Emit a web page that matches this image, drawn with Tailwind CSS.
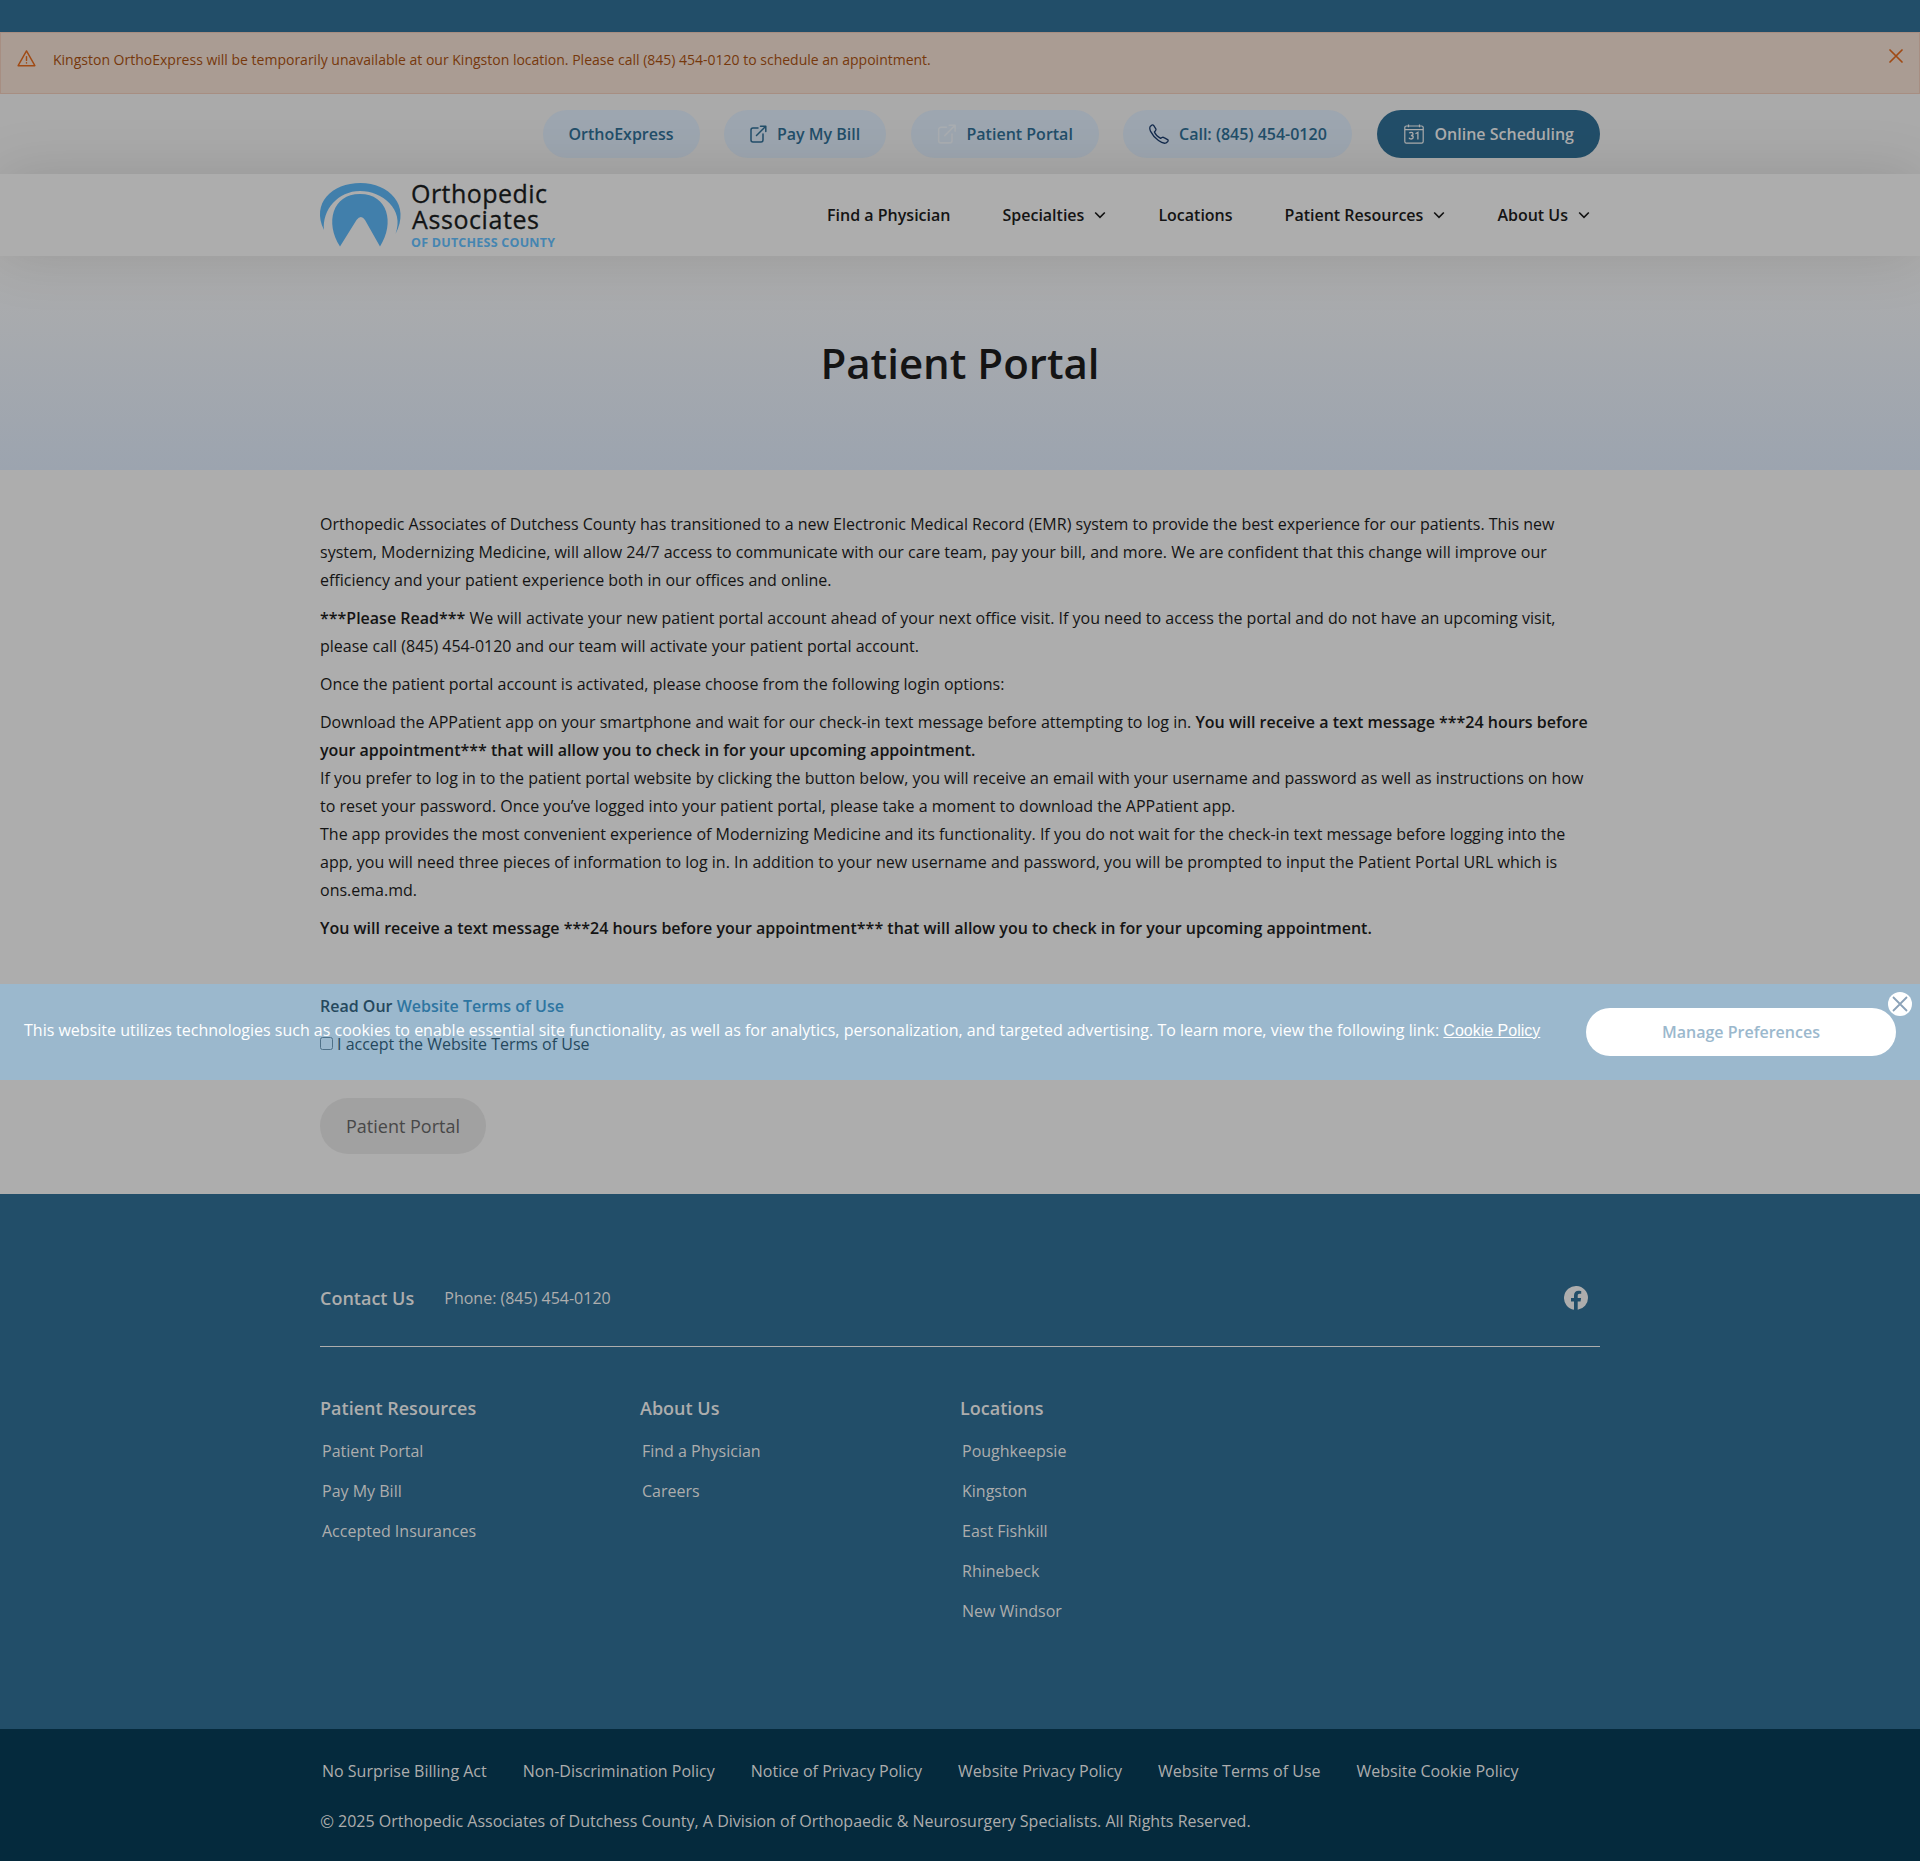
<!DOCTYPE html>
<html lang="en">
<head>
<meta charset="utf-8">
<title>Patient Portal</title>
<script src="https://cdn.jsdelivr.net/npm/@tailwindcss/browser@4"></script>
</head>
<body class="relative w-[1920px] h-[1861px] overflow-hidden bg-[#adadad] text-[#141414] text-base font-['Open_Sans',sans-serif]">
<div class="h-8 bg-[#224e69]"></div>

<div class="h-[62px] flex items-start bg-[#aa9c93] border border-[#a78e82] px-4 text-[#76380c]">
  <svg class="mt-[16px] w-[19px] h-[19px] shrink-0" viewBox="0 0 20 20" fill="none" stroke="#a04a14" stroke-width="1.5" stroke-linejoin="round" stroke-linecap="round"><path d="M10 2 L18.8 17.6 H1.2Z"/><path d="M10 8v4M10 14.4v.4"/></svg>
  <p class="ml-[17px] mt-[17px] text-sm leading-5 grow">Kingston OrthoExpress will be temporarily unavailable at our Kingston location. Please call (845) 454-0120 to schedule an appointment.</p>
  <svg class="mt-[16px] w-[14px] h-[14px]" viewBox="0 0 14 14" stroke="#a04a14" stroke-width="1.7" stroke-linecap="round"><path d="M1 1 13 13M13 1 1 13"/></svg>
</div>

<div class="h-20 bg-[#aaaaaa] pt-4">
  <div class="w-[1280px] mx-auto flex justify-end gap-[24.5px] font-semibold text-[#224e69]">
    <a class="h-12 w-[157px] rounded-full bg-[#9da6b0] flex items-center justify-center">OrthoExpress</a>
    <a class="h-12 w-[162px] rounded-full bg-[#9da6b0] flex items-center pl-[26px]"><svg class="w-[17px] h-[18px] mr-[10px]" viewBox="0 0 17 18" fill="none" stroke="#224e69" stroke-width="1.5" stroke-linecap="round" stroke-linejoin="round"><path d="M8 3H3a2 2 0 0 0-2 2v10a2 2 0 0 0 2 2h8a2 2 0 0 0 2-2V9M6.5 10.5 15.5 1.5M10.5 1.2h5.3v5.3"/></svg>Pay My Bill</a>
    <a class="h-12 w-[188px] rounded-full bg-[#9da6b0] flex items-center pl-[26px]"><svg class="w-[20px] h-[20px] mr-[10px]" viewBox="0 0 17 18" fill="none" stroke="#a9adb1" stroke-width="1.4" stroke-linecap="round" stroke-linejoin="round"><path d="M8 3H3a2 2 0 0 0-2 2v10a2 2 0 0 0 2 2h8a2 2 0 0 0 2-2V9M6.5 10.5 15.5 1.5M10.5 1.2h5.3v5.3"/></svg>Patient Portal</a>
    <a class="h-12 w-[229px] rounded-full bg-[#9da6b0] flex items-center pl-[26px]"><svg class="w-[20px] h-[20px] mr-[10px]" viewBox="0 0 20 20" fill="none" stroke="#132a4c" stroke-width="1.3" stroke-linejoin="round"><path d="M1.2 2.5 3 1Q4 .6 4.8 1.6L6.8 4.8Q7.3 5.8 6.4 6.8L5.4 8Q7 12 11.6 14.4L13 13.5Q14 13 15 13.6L18.6 15.6Q19.6 16.4 18.8 17.4L17 19Q14 20 9.5 16.6 4 12.3 1.6 7.4.2 4.3 1.2 2.5Z"/></svg>Call: (845) 454-0120</a>
    <a class="h-12 w-[223.5px] rounded-full bg-[#224e69] text-[#adadad] flex items-center pl-[27px]"><svg class="w-5 h-5 mr-[11px]" viewBox="0 0 20 20" fill="none" stroke="#adadad" stroke-width="1.2"><rect x=".8" y="2" width="18.4" height="17.2" rx="1.6"/><path d="M.8 5.7h18.4M4.5.5v2.8M15.5.5v2.8"/><path d="M5.3 9.3q.5-1 2-1 1.700 0 1.700 1.600T6.900 11.500q2.300 0 2.300 1.700T7.200 15q-1.600 0-2.200-1.200M11.500 9.700l2.400-1.400V15.500" stroke-width="1.3"/></svg>Online Scheduling</a>
  </div>
</div>

<header class="relative z-10 h-[82px] bg-[#adadad] shadow-[0_0_60px_rgba(0,0,0,0.13)]">
  <div class="w-[1280px] h-full mx-auto flex items-start justify-between">
    <svg class="mt-[9px] w-[240px] h-[68px] overflow-visible" viewBox="0 0 240 68">
      <g fill="#417fab"><path d="M4 47C-9 20 12 0 40.500 0S91 22 75.500 51C85 26 62 8 40 8S2 27 4 47Z"/><path d="M20 63.500C5 40 12 11 40 11S75 40 60 63.500L45 37Q41 31 36.500 37Z"/></g>
      <g font-family="Open Sans, sans-serif"><text x="91" y="20" font-size="25" textLength="136" fill="#121415" stroke="#121415" stroke-width=".3">Orthopedic</text><text x="92" y="45.500" font-size="25" textLength="127" fill="#121415" stroke="#121415" stroke-width=".3">Associates</text><text x="91" y="64" font-size="12.500" font-weight="700" textLength="144" fill="#4585b1">OF DUTCHESS COUNTY</text></g>
    </svg>
    <nav class="h-full flex items-center gap-[52px] pr-[10px] font-semibold">
      <a>Find a Physician</a>
      <a class="flex items-center gap-[10px]">Specialties<svg class="w-3 h-3" viewBox="0 0 12 12" fill="none" stroke="#121212" stroke-width="1.6"><path d="M1.200 3.500 6 8.400 10.800 3.500"/></svg></a>
      <a>Locations</a>
      <a class="flex items-center gap-[10px]">Patient Resources<svg class="w-3 h-3" viewBox="0 0 12 12" fill="none" stroke="#121212" stroke-width="1.6"><path d="M1.200 3.500 6 8.400 10.800 3.500"/></svg></a>
      <a class="flex items-center gap-[10px]">About Us<svg class="w-3 h-3" viewBox="0 0 12 12" fill="none" stroke="#121212" stroke-width="1.6"><path d="M1.200 3.500 6 8.400 10.800 3.500"/></svg></a>
    </nav>
  </div>
</header>

<section class="h-[214px] flex items-center justify-center bg-linear-to-b from-[#adadad] to-[#9ca4af]">
  <h1 class="text-[42px] leading-none font-semibold">Patient Portal</h1>
</section>

<div class="absolute left-0 top-[984px] w-full h-24 bg-[#9bb8cd]"></div>

<main class="relative h-[724px] pt-10">
  <div class="w-[1280px] mx-auto leading-7">
    <p class="mb-[10px]">Orthopedic Associates of Dutchess County has transitioned to a new Electronic Medical Record (EMR) system to provide the best experience for our patients. This new<br>system, Modernizing Medicine, will allow 24/7 access to communicate with our care team, pay your bill, and more. We are confident that this change will improve our<br>efficiency and your patient experience both in our offices and online.</p>
    <p class="mb-[10px]"><b class="font-semibold">***Please Read***</b> We will activate your new patient portal account ahead of your next office visit. If you need to access the portal and do not have an upcoming visit,<br>please call (845) 454-0120 and our team will activate your patient portal account.</p>
    <p class="mb-[10px]">Once the patient portal account is activated, please choose from the following login options:</p>
    <ul class="mb-[10px]">
      <li>Download the APPatient app on your smartphone and wait for our check-in text message before attempting to log in. <b class="font-semibold">You will receive a text message ***24 hours before<br>your appointment*** that will allow you to check in for your upcoming appointment.</b></li>
      <li>If you prefer to log in to the patient portal website by clicking the button below, you will receive an email with your username and password as well as instructions on how<br>to reset your password. Once you’ve logged into your patient portal, please take a moment to download the APPatient app.</li>
      <li>The app provides the most convenient experience of Modernizing Medicine and its functionality. If you do not wait for the check-in text message before logging into the<br>app, you will need three pieces of information to log in. In addition to your new username and password, you will be prompted to input the Patient Portal URL which is<br>ons.ema.md.</li>
    </ul>
    <p class="font-semibold mb-[50px]">You will receive a text message ***24 hours before your appointment*** that will allow you to check in for your upcoming appointment.</p>
    <p class="font-semibold text-[#25485d] mb-[10px]">Read Our <a class="text-[#2e75a1]">Website Terms of Use</a></p>
    <label class="flex items-center text-[#25485d]"><span class="w-[13px] h-[13px] mr-1 -mt-0.5 border border-[#4f7188] rounded-[2.5px]"></span>I accept the Website Terms of Use</label>
    <button class="mt-10 w-[166px] h-14 rounded-full bg-[#a1a1a1] text-[#484848] text-lg">Patient Portal</button>
  </div>
</main>

<aside class="absolute z-20 left-0 top-[984px] w-full h-24 flex items-center justify-between px-6 text-white">
  <p class="-mt-1">This website utilizes technologies such as cookies to enable essential site functionality, as well as for analytics, personalization, and targeted advertising. To learn more, view the following link: <a class="underline font-['Liberation_Sans',sans-serif]">Cookie Policy</a></p>
  <button class="w-[310px] h-12 rounded-full bg-white text-[#9bb8cd] font-semibold">Manage Preferences</button>
  <svg class="absolute right-2 top-2 w-6 h-6" viewBox="0 0 24 24"><circle cx="12" cy="12" r="12" fill="#fff"/><path d="M5 5 19 19M19 5 5 19" stroke="#8ba2b8" stroke-width="1.800"/></svg>
</aside>

<footer class="bg-[#224e69] text-[#adadad]">
  <div class="w-[1280px] h-[535px] mx-auto pt-[80px]">
    <div class="h-[73px] border-b border-[#adadad] flex items-start pt-3">
      <h2 class="text-lg leading-6 font-semibold">Contact Us</h2>
      <span class="ml-[30px] leading-6">Phone: (845) 454-0120</span>
      <svg class="w-6 h-6 ml-auto mr-3" viewBox="0 0 24 24" fill="#adadad"><path d="M24 12a12 12 0 1 0-14 11.850V15.500H7V12h3V9.400c0-3 1.800-4.700 4.500-4.700 1.300 0 2.700.25 2.700.25v2.900h-1.500c-1.500 0-2 .9-2 1.900V12h3.400l-.55 3.500H13.700v8.350A12 12 0 0 0 24 12Z"/></svg>
    </div>
    <div class="grid grid-cols-4 pt-[47px]">
      <div><h3 class="text-lg leading-7 font-semibold mb-[9px]">Patient Resources</h3><ul class="pl-0.5 leading-10"><li>Patient Portal</li><li>Pay My Bill</li><li>Accepted Insurances</li></ul></div>
      <div><h3 class="text-lg leading-7 font-semibold mb-[9px]">About Us</h3><ul class="pl-0.5 leading-10"><li>Find a Physician</li><li>Careers</li></ul></div>
      <div><h3 class="text-lg leading-7 font-semibold mb-[9px]">Locations</h3><ul class="pl-0.5 leading-10"><li>Poughkeepsie</li><li>Kingston</li><li>East Fishkill</li><li>Rhinebeck</li><li>New Windsor</li></ul></div>
    </div>
  </div>
  <div class="h-[132px] bg-[#052a3d] pt-[30px]">
    <div class="w-[1280px] mx-auto">
      <div class="pl-0.5 flex gap-9 leading-6"><a>No Surprise Billing Act</a><a>Non-Discrimination Policy</a><a>Notice of Privacy Policy</a><a>Website Privacy Policy</a><a>Website Terms of Use</a><a>Website Cookie Policy</a></div>
      <p class="mt-[26px] leading-6 flex"><span class="w-[18px] text-[17px] leading-6 font-['Noto_Sans_CJK_SC',sans-serif]">©</span>2025 Orthopedic Associates of Dutchess County, A Division of Orthopaedic &amp; Neurosurgery Specialists. All Rights Reserved.</p>
    </div>
  </div>
</footer>
</body>
</html>
